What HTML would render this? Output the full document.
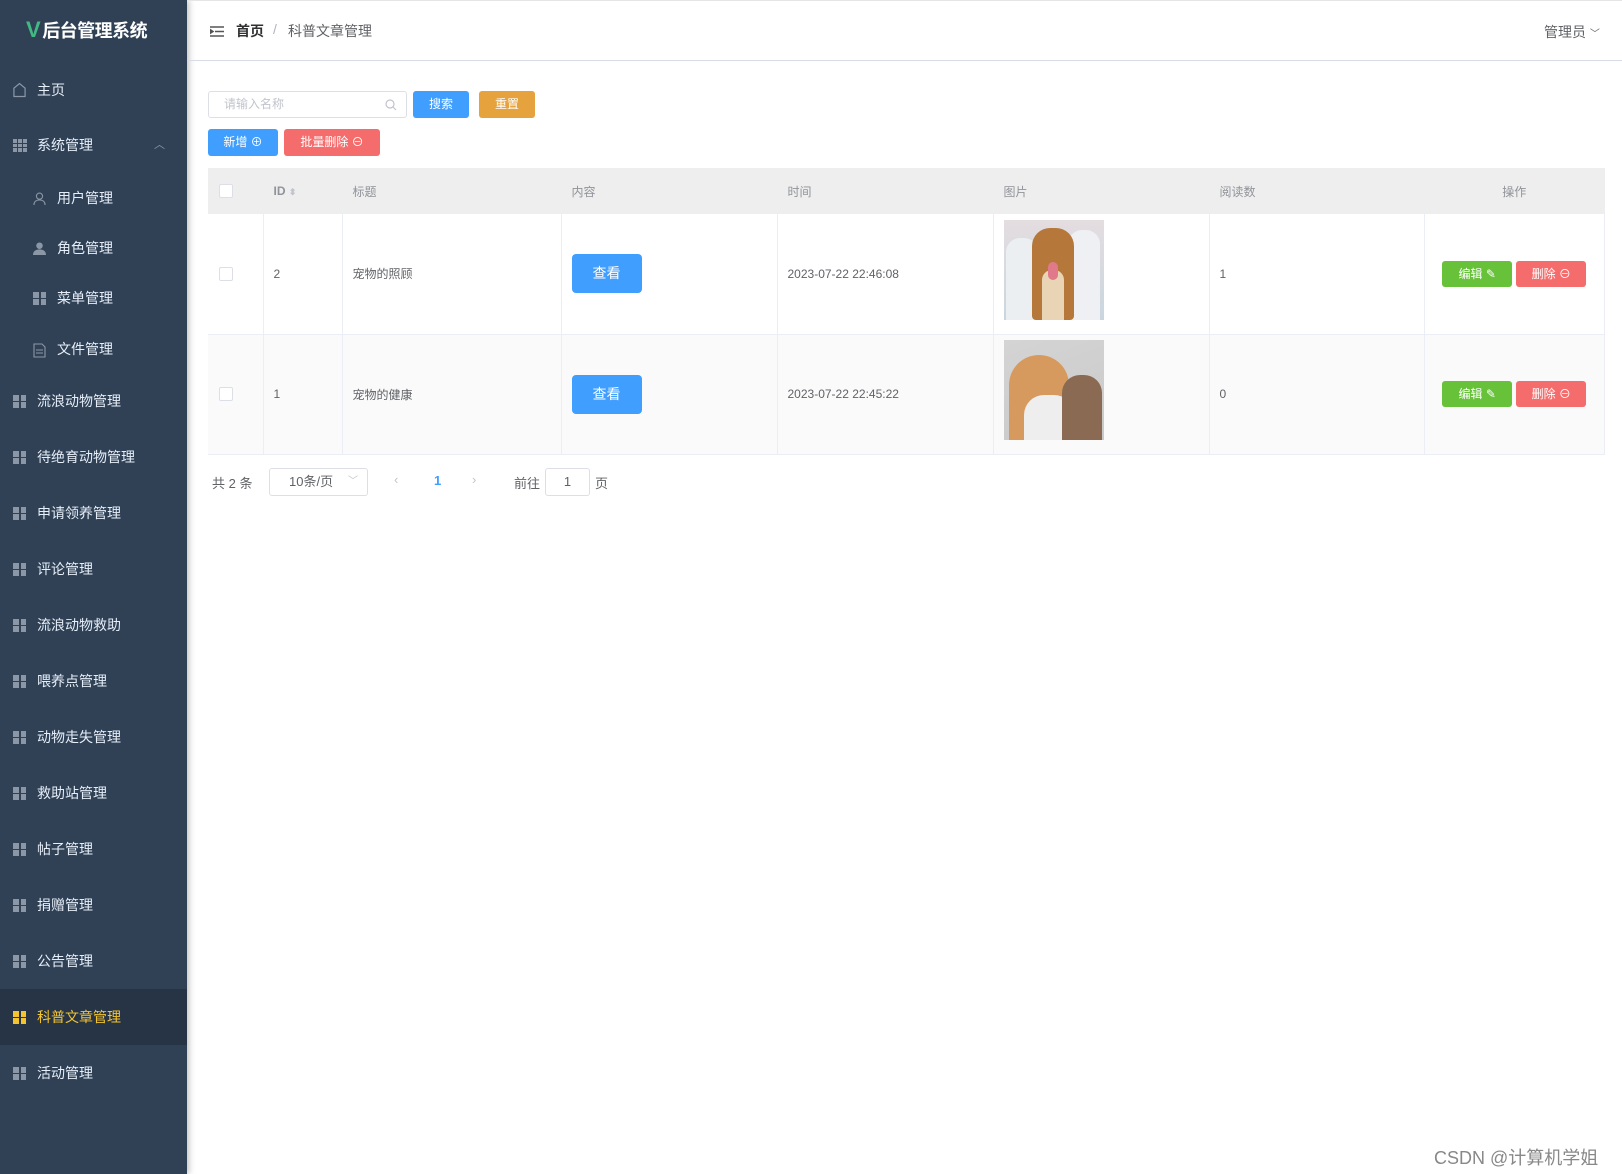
<!DOCTYPE html>
<html><head><meta charset="utf-8">
<style>
*{box-sizing:border-box;margin:0;padding:0}
body{width:1622px;height:1174px;overflow:hidden;background:#fff;font-family:"Liberation Sans","Noto Sans CJK SC",sans-serif;font-size:13px;color:#606266;position:relative}
.side{position:absolute;left:0;top:0;width:187px;height:1174px;background:#304156;box-shadow:2px 0 6px rgba(0,0,0,.25)}
.logo{position:absolute;top:17px;left:26px;color:#fff;font-size:18px;font-weight:bold;letter-spacing:-0.5px}
.logo b{color:#42b983;font-size:22px;margin-right:2px}
.mi{position:absolute;left:0;width:187px;height:56px;line-height:56px;color:#e6eef8;font-size:14px;padding-left:37px}
.mi.sub{padding-left:57px}
.mi.act{background:#263445;color:#f4c430}
.ic{position:absolute;top:22px;left:13px;width:13px;height:13px}
.mi.sub .ic{left:33px}
.g{display:grid;grid-template-columns:6px 6px;grid-gap:1.5px}
.g i{display:block;width:5.5px;height:5.5px;background:#8b97a6}
.act .g i{background:#f4c430}
.hdr{position:absolute;left:187px;top:0;right:0;height:61px;border-bottom:1px solid #d8dce5;border-top:1px solid #e5e5e5}
.abs{position:absolute}
.btn{position:absolute;color:#fff;font-size:12px;text-align:center;border-radius:3px}
table{position:absolute;left:208px;top:168px;width:1397px;border-collapse:collapse;font-size:12px}
th{background:#eeeeee;height:46px;text-align:left;font-weight:normal;color:#909399;padding-left:10px;border-right:1px solid #eee}
td{height:120px;border-right:1px solid #ebeef5;border-bottom:1px solid #ebeef5;padding-left:10px;color:#606266}
tr.r2 td{background:#fafafa}
.cb{display:inline-block;width:14px;height:14px;border:1px solid #dcdfe6;background:#fff;border-radius:2px;vertical-align:middle}
.view{display:inline-block;width:70px;height:39px;line-height:39px;background:#409eff;color:#fff;text-align:center;border-radius:4px;font-size:14px}
.ed,.dl{display:inline-block;width:70px;height:26px;line-height:26px;color:#fff;text-align:center;border-radius:3px;font-size:12px}
.ed{background:#67c23a}.dl{background:#f56c6c;margin-left:4px}
</style></head><body>
<div class="side">
<div class="logo"><b>V</b>后台管理系统</div>
<div class="mi" style="top:62px"><svg class="ic" viewBox="0 0 14 16" style="top:20px;height:16px"><path d="M1 15V6L7 1l6 5v9z" fill="none" stroke="#8b97a6" stroke-width="1.3"/></svg>主页</div>
<div class="mi" style="top:117px"><div class="ic" style="display:grid;grid-template-columns:repeat(3,4px);gap:1px">
<i style="background:#8b97a6"></i><i style="background:#8b97a6"></i><i style="background:#8b97a6"></i><i style="background:#8b97a6"></i><i style="background:#8b97a6"></i><i style="background:#8b97a6"></i><i style="background:#8b97a6"></i><i style="background:#8b97a6"></i><i style="background:#8b97a6"></i></div>系统管理<span style="position:absolute;right:22px;top:0;color:#8b97a6;font-size:11px">︿</span></div>
<div class="mi sub" style="top:170px"><svg class="ic" viewBox="0 0 14 14"><circle cx="7" cy="4.5" r="3.3" fill="none" stroke="#8b97a6" stroke-width="1.2"/><path d="M1 14c0-4 3-5.5 6-5.5s6 1.5 6 5.5" fill="none" stroke="#8b97a6" stroke-width="1.2"/></svg>用户管理</div>
<div class="mi sub" style="top:220px"><svg class="ic" viewBox="0 0 14 14"><circle cx="7" cy="4" r="3.5" fill="#8b97a6"/><path d="M0 14c0-4 3-6 7-6s7 2 7 6z" fill="#8b97a6"/></svg>角色管理</div>
<div class="mi sub" style="top:270px"><div class="ic g"><i></i><i></i><i></i><i></i></div>菜单管理</div>
<div class="mi sub" style="top:321px"><svg class="ic" viewBox="0 0 13 15" style="height:15px"><path d="M1 1h8l3 3v10H1z M3 7h7M3 10h7" fill="none" stroke="#8b97a6" stroke-width="1.1"/></svg>文件管理</div>
<div class="mi" style="top:373px"><div class="ic g"><i></i><i></i><i></i><i></i></div>流浪动物管理</div>
<div class="mi" style="top:429px"><div class="ic g"><i></i><i></i><i></i><i></i></div>待绝育动物管理</div>
<div class="mi" style="top:485px"><div class="ic g"><i></i><i></i><i></i><i></i></div>申请领养管理</div>
<div class="mi" style="top:541px"><div class="ic g"><i></i><i></i><i></i><i></i></div>评论管理</div>
<div class="mi" style="top:597px"><div class="ic g"><i></i><i></i><i></i><i></i></div>流浪动物救助</div>
<div class="mi" style="top:653px"><div class="ic g"><i></i><i></i><i></i><i></i></div>喂养点管理</div>
<div class="mi" style="top:709px"><div class="ic g"><i></i><i></i><i></i><i></i></div>动物走失管理</div>
<div class="mi" style="top:765px"><div class="ic g"><i></i><i></i><i></i><i></i></div>救助站管理</div>
<div class="mi" style="top:821px"><div class="ic g"><i></i><i></i><i></i><i></i></div>帖子管理</div>
<div class="mi" style="top:877px"><div class="ic g"><i></i><i></i><i></i><i></i></div>捐赠管理</div>
<div class="mi" style="top:933px"><div class="ic g"><i></i><i></i><i></i><i></i></div>公告管理</div>
<div class="mi act" style="top:989px"><div class="ic g"><i></i><i></i><i></i><i></i></div>科普文章管理</div>
<div class="mi" style="top:1045px"><div class="ic g"><i></i><i></i><i></i><i></i></div>活动管理</div>
</div>
<div class="hdr">
<svg class="abs" style="left:23px;top:25px" width="14" height="11" viewBox="0 0 14 11"><path d="M0 1h14M5 5.5h9M0 10h14M0 3.5l3 2-3 2z" stroke="#555" stroke-width="1.5" fill="#555"/></svg>
<span class="abs" style="left:49px;top:20px;font-size:14px;color:#303133;font-weight:bold">首页</span>
<span class="abs" style="left:86px;top:20px;font-size:14px;color:#b0b4bc">/</span>
<span class="abs" style="left:101px;top:20px;font-size:14px;color:#606266">科普文章管理</span>
<span class="abs" style="left:1357px;top:21px;font-size:14px;color:#606266">管理员 <span style="font-size:10px">﹀</span></span>
</div>
<div class="abs" style="left:208px;top:91px;width:199px;height:27px;border:1px solid #dcdfe6;border-radius:3px;font-size:12px;color:#c0c4cc;line-height:25px;padding-left:15px">请输入名称
<svg class="abs" style="right:9px;top:7px" width="12" height="12" viewBox="0 0 12 12"><circle cx="5" cy="5" r="4" fill="none" stroke="#c0c4cc" stroke-width="1.2"/><path d="M8 8l3 3" stroke="#c0c4cc" stroke-width="1.2"/></svg></div>
<div class="btn" style="left:413px;top:91px;width:56px;height:27px;line-height:27px;background:#409eff">搜索</div>
<div class="btn" style="left:479px;top:91px;width:56px;height:27px;line-height:27px;background:#e6a23c">重置</div>
<div class="btn" style="left:208px;top:129px;width:70px;height:27px;line-height:27px;background:#409eff">新增 ⊕</div>
<div class="btn" style="left:284px;top:129px;width:96px;height:27px;line-height:27px;background:#f56c6c">批量删除 ⊖</div>
<table>
<tr><th style="width:55px;padding-left:11px"><span class="cb"></span></th><th style="width:79px;font-weight:bold">ID <span style="font-size:9px;color:#c0c4cc">⬍</span></th><th style="width:219px">标题</th><th style="width:216px">内容</th><th style="width:216px">时间</th><th style="width:216px">图片</th><th style="width:215px">阅读数</th><th style="text-align:center;padding:0">操作</th></tr>
<tr><td style="padding-left:11px"><span class="cb"></span></td><td>2</td><td>宠物的照顾</td><td><span class="view">查看</span></td><td>2023-07-22 22:46:08</td>
<td><div style="width:100px;height:100px;background:linear-gradient(180deg,#e4dde0,#c9d6de);position:relative;top:-4px;overflow:hidden">
<div style="position:absolute;left:2px;top:18px;width:32px;height:82px;background:#eceff2;border-radius:14px 14px 0 0"></div>
<div style="position:absolute;left:64px;top:10px;width:32px;height:90px;background:#eef0f3;border-radius:14px 14px 0 0"></div>
<div style="position:absolute;left:28px;top:8px;width:42px;height:92px;background:#b5783a;border-radius:18px 18px 4px 4px"></div>
<div style="position:absolute;left:38px;top:50px;width:22px;height:50px;background:#e9d5b5;border-radius:10px 10px 0 0"></div>
<div style="position:absolute;left:44px;top:42px;width:10px;height:18px;background:#e07a8a;border-radius:5px"></div></div></td>
<td>1</td><td style="text-align:center;padding:0"><span class="ed">编辑 ✎</span><span class="dl">删除 ⊖</span></td></tr>
<tr class="r2"><td style="padding-left:11px"><span class="cb"></span></td><td>1</td><td>宠物的健康</td><td><span class="view">查看</span></td><td>2023-07-22 22:45:22</td>
<td><div style="width:100px;height:100px;background:linear-gradient(160deg,#d4d4d4,#c9c9c9);position:relative;top:-4px;overflow:hidden"><div style="position:absolute;left:5px;top:15px;width:60px;height:85px;background:#d79a5e;border-radius:30px 30px 0 0"></div><div style="position:absolute;left:20px;top:55px;width:50px;height:45px;background:#eee;border-radius:20px 20px 0 0"></div><div style="position:absolute;left:58px;top:35px;width:40px;height:65px;background:#8a6a52;border-radius:18px 18px 0 0"></div></div></td>
<td>0</td><td style="text-align:center;padding:0"><span class="ed">编辑 ✎</span><span class="dl">删除 ⊖</span></td></tr>
</table>
<span class="abs" style="left:212px;top:473px;color:#606266">共 2 条</span>
<div class="abs" style="left:269px;top:468px;width:99px;height:28px;border:1px solid #dcdfe6;border-radius:3px;line-height:26px;padding-left:19px;color:#606266">10条/页<span style="position:absolute;right:9px;color:#c0c4cc;font-size:10px">﹀</span></div>
<span class="abs" style="left:394px;top:472px;color:#c0c4cc">‹</span>
<span class="abs" style="left:434px;top:473px;color:#409eff;font-weight:bold">1</span>
<span class="abs" style="left:472px;top:472px;color:#c0c4cc">›</span>
<span class="abs" style="left:514px;top:473px">前往</span>
<div class="abs" style="left:545px;top:468px;width:45px;height:28px;border:1px solid #dcdfe6;border-radius:3px;line-height:26px;text-align:center">1</div>
<span class="abs" style="left:595px;top:473px">页</span>
<span class="abs" style="left:1434px;top:1144px;font-size:18px;color:#888">CSDN @计算机学姐</span>
</body></html>
